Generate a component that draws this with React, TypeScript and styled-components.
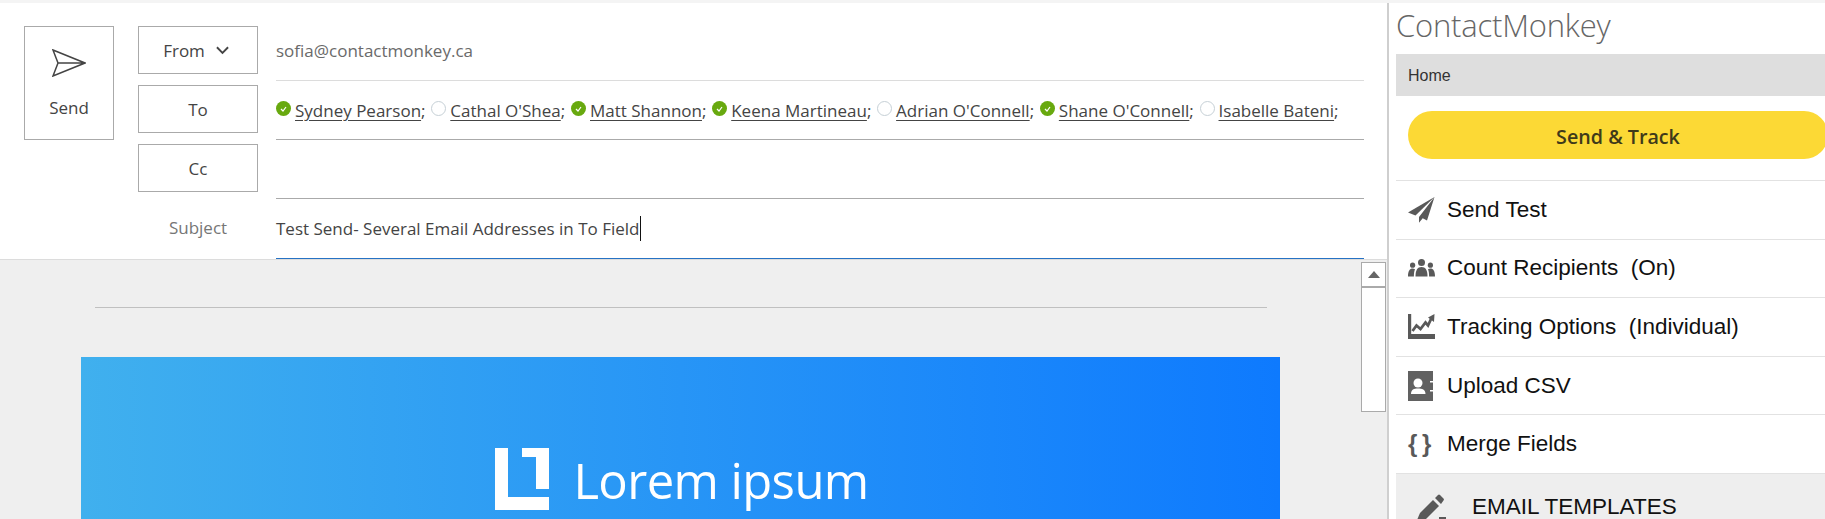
import styled, { createGlobalStyle } from 'styled-components'

const GlobalStyle = createGlobalStyle`
  * { box-sizing: border-box; }
  html, body { margin: 0; height: 100%; overflow: hidden; background: #fff; }
  #root { height: 100%; }
`

const uiFont = `'Open Sans', 'Noto Sans', sans-serif`
const menuFont = `'Liberation Sans', Arial, sans-serif`

const Page = styled.div`
  display: flex;
  height: 519px;
  overflow: hidden;
  border-top: 3px solid #f4f4f4;
  font-family: ${uiFont};
  color: #444;
`

const Compose = styled.main`
  position: relative;
  flex: 0 0 1389px;
  display: flex;
  flex-direction: column;
  border-right: 2px solid #cfcfcf;
  background: #efefef;
`

const Header = styled.header`
  display: flex;
  gap: 24px;
  padding: 19px 23px 0 24px;
  background: #fff;
  border-bottom: 1px solid #dcdcdc;
`

const SendButton = styled.button`
  flex: 0 0 90px;
  height: 114px;
  margin-top: 4px;
  padding: 0;
  display: flex;
  flex-direction: column;
  align-items: center;
  background: #fff;
  border: 1px solid #aaa;
  font: 400 17px ${uiFont};
  color: #444;

  svg { margin-top: 22px; margin-bottom: 19px; }
`

const Rows = styled.div`
  flex: 1;
  display: flex;
  flex-direction: column;
`

const Row = styled.div<{ $tall?: boolean }>`
  display: flex;
  gap: 18px;
  height: ${({ $tall }) => ($tall ? '60px' : '59px')};
`

const LabelButton = styled.div<{ $menu?: boolean }>`
  flex: 0 0 120px;
  height: 48px;
  margin-top: 4px;
  padding: 1px ${({ $menu }) => ($menu ? '4px' : '0')} 0 0;
  display: flex;
  align-items: center;
  justify-content: center;
  gap: 11px;
  border: 1px solid #aaa;
  font-size: 17px;
  color: #444;
`

const SubjectLabel = styled.div`
  flex: 0 0 120px;
  padding-top: 17px;
  text-align: center;
  font-size: 17px;
  color: #767676;
`

const Field = styled.div<{ $line: string; $muted?: boolean }>`
  flex: 1;
  display: flex;
  align-items: center;
  padding-bottom: ${({ $muted }) => ($muted ? '2px' : '0')};
  border-bottom: 1px solid ${({ $line }) => $line};
  font-size: 17px;
  color: ${({ $muted }) => ($muted ? '#6a6a6a' : '#444')};
`

const Caret = styled.span`
  display: inline-block;
  width: 1px;
  height: 25px;
  margin-left: 1px;
  background: #111;
`

const Recipient = styled.span`
  display: inline-flex;
  align-items: center;
  margin-right: 5.75px;
  white-space: pre;
`

const Name = styled.span`
  margin-left: 4px;
  text-decoration: underline;
  text-underline-offset: 3px;
  text-decoration-thickness: 1px;
`

const StatusDot = styled.span<{ $ok: boolean }>`
  flex: none;
  width: 15px;
  height: 15px;
  display: flex;
  align-items: center;
  justify-content: center;
  margin-top: -3px;
  border-radius: 50%;
  background: ${({ $ok }) => ($ok ? '#68a90f' : '#fff')};
  border: ${({ $ok }) => ($ok ? 'none' : '1px solid #c6d0d6')};
`

const Reading = styled.section`
  position: relative;
  flex: 1;
  overflow: hidden;
  padding: 47px 107px 0 81px;
`

const Rule = styled.div`
  height: 1px;
  margin: 0 13px 49px 14px;
  background: #c0c0c0;
`

const Banner = styled.div`
  height: 300px;
  display: flex;
  justify-content: center;
  align-items: flex-start;
  gap: 24px;
  padding: 91px 0 0 3px;
  color: #fff;
  background: linear-gradient(90deg, #40b0ee 0%, #0e7afe 100%);
`

const BannerText = styled.span`
  margin-top: 1px;
  font-size: 49px;
  line-height: 62px;
  letter-spacing: -0.6px;
`

const ScrollTrack = styled.div`
  position: absolute;
  top: 2px;
  right: 1px;
  width: 25px;
  height: 150px;
  background: #fff;
  border: 1px solid #aaa;
`

const ScrollUp = styled.div`
  height: 25px;
  display: flex;
  align-items: center;
  justify-content: center;
  border-bottom: 2px solid #aaa;
`

const Sidebar = styled.aside`
  flex: 1;
  min-width: 0;
  padding-left: 7px;
  overflow: hidden;
`

const Title = styled.h1`
  margin: 0;
  height: 51px;
  font-size: 31px;
  font-weight: 300;
  line-height: 45px;
  letter-spacing: -0.2px;
  color: #666;
`

const Crumb = styled.div`
  height: 42px;
  padding: 1px 0 0 12px;
  display: flex;
  align-items: center;
  background: #dedede;
  font: 16px ${menuFont};
  color: #333;
`

const TrackWrap = styled.div`
  height: 85px;
  padding: 15px 0 0 12px;
  border-bottom: 1px solid #e2e2e2;
`

const TrackButton = styled.div`
  width: 420px;
  height: 48px;
  padding-top: 2px;
  display: flex;
  align-items: center;
  justify-content: center;
  border-radius: 24px;
  background: #fcd935;
  font-size: 19.7px;
  font-weight: 600;
  color: #3f3a1a;
`

const MenuItem = styled.div`
  height: 58.6px;
  padding-left: 12px;
  display: flex;
  align-items: center;
  gap: 12px;
  border-bottom: 1px solid #e2e2e2;
  font: 22.5px ${menuFont};
  color: #111;
  white-space: pre;
`

const IconSlot = styled.span`
  flex: none;
  width: 27px;
  display: flex;
  justify-content: flex-start;
  color: #595959;
`

const Braces = styled.span`
  font: 700 24px ${menuFont};
  word-spacing: -2px;
  color: #595959;
  line-height: 1;
`

const SectionHead = styled.div`
  height: 60px;
  padding: 15px 0 0 20px;
  display: flex;
  align-items: flex-start;
  gap: 24px;
  background: #eeeeee;
  font: 22.5px/36px ${menuFont};
  color: #111;

  svg { margin-top: 4px; }
`

const recipients = [
  { name: 'Sydney Pearson', ok: true },
  { name: "Cathal O'Shea", ok: false },
  { name: 'Matt Shannon', ok: true },
  { name: 'Keena Martineau', ok: true },
  { name: "Adrian O'Connell", ok: false },
  { name: "Shane O'Connell", ok: true },
  { name: 'Isabelle Bateni', ok: false },
]

function SendOutline() {
  return (
    <svg width="34" height="28" viewBox="0 0 34 28" fill="none" stroke="#444" strokeWidth="1.5">
      <path d="M1 1 L33 14 L1 27 L6 14 Z M6 14 H33" />
    </svg>
  )
}

function Chevron() {
  return (
    <svg width="13" height="9" viewBox="0 0 14 9" fill="none" stroke="#444" strokeWidth="2">
      <path d="M1 1 L7 7 L13 1" />
    </svg>
  )
}

function Check() {
  return (
    <svg width="7" height="6" viewBox="0 0 7 6" fill="none" stroke="#fff" strokeWidth="1.2">
      <path d="M1 3 L3 5 L6 1" />
    </svg>
  )
}

function Logo() {
  return (
    <svg width="54" height="62" viewBox="0 0 54 62" fill="#fff">
      <path d="M0 0 H13 V49 H54 V62 H0 Z" />
      <path d="M27 0 H54 V41 H41 V9 H27 Z" />
    </svg>
  )
}

function PlaneIcon() {
  return (
    <svg width="27" height="26" viewBox="0 0 27 26" fill="#595959">
      <path d="M26.5 0 L0 15.5 L7.5 18.5 Z" />
      <path d="M26.5 0 L11 20 L11 25.8 L14.7 21.3 L19 23.5 Z" />
    </svg>
  )
}

function PeopleIcon() {
  return (
    <svg width="27" height="18" viewBox="0 0 27 18" fill="#595959">
      <circle cx="13.5" cy="3.5" r="3.5" />
      <circle cx="4.6" cy="6.2" r="2.6" />
      <circle cx="22.4" cy="6.2" r="2.6" />
      <path d="M7.5 17.5 C7.5 11 9.5 8 13.5 8 C17.5 8 19.5 11 19.5 17.5 Z" />
      <path d="M0 17.5 C0 12 1.8 9.5 4.6 9.5 C5.6 9.5 6.4 9.8 7 10.3 C6.2 12 5.9 14.5 5.9 17.5 Z" />
      <path d="M27 17.5 C27 12 25.2 9.5 22.4 9.5 C21.4 9.5 20.6 9.8 20 10.3 C20.8 12 21.1 14.5 21.1 17.5 Z" />
    </svg>
  )
}

function TrackingIcon() {
  return (
    <svg width="27" height="25" viewBox="0 0 27 25" fill="#595959">
      <path d="M0 0 H3.2 V20 H27 V25 H0 Z" />
      <path d="M4.5 17 L8.5 11.5 L12.5 15 L17.5 8.5 L20 11.5 L23.5 4" fill="none" stroke="#595959" strokeWidth="2.8" />
      <path d="M20 3.5 L26.5 0 L26 8 Z" />
    </svg>
  )
}

function ContactsIcon() {
  return (
    <svg width="25" height="30" viewBox="0 0 25 30" fill="#616161">
      <path d="M0 0 H25 V10 H22 V11.5 H25 V19 H22 V20.5 H25 V30 H22 V30 H0 Z" />
      <circle cx="10" cy="12" r="4.5" fill="#fff" />
      <path d="M3 23 C3 18.5 6 17.5 10 17.5 C14 17.5 17.5 18.5 17.5 23 Z" fill="#fff" />
    </svg>
  )
}

function PencilIcon() {
  return (
    <svg width="32" height="32" viewBox="0 0 32 32" fill="#595959">
      <path d="M1 27 L4 20 L17 7 L23 13 L10 26 L3 30 Z" />
      <path d="M19 5 L22 2 Q23 1 24 2 L27.5 5.5 Q28.5 6.5 27.5 7.5 L25 11 Z" />
      <path d="M23 24 H30 V26 H23 Z M20 29 H30 V31 H20 Z" />
    </svg>
  )
}

export default function App() {
  return (
    <>
      <GlobalStyle />
      <Page>
        <Compose>
          <Header>
            <SendButton>
              <SendOutline />
              Send
            </SendButton>
            <Rows>
              <Row>
                <LabelButton $menu>
                  From <Chevron />
                </LabelButton>
                <Field $line="#dcdcdc" $muted>
                  sofia@contactmonkey.ca
                </Field>
              </Row>
              <Row>
                <LabelButton>To</LabelButton>
                <Field $line="#aaa">
                  {recipients.map((r) => (
                    <Recipient key={r.name}>
                      <StatusDot $ok={r.ok}>{r.ok && <Check />}</StatusDot>
                      <Name>{r.name}</Name>;
                    </Recipient>
                  ))}
                </Field>
              </Row>
              <Row>
                <LabelButton>Cc</LabelButton>
                <Field $line="#aaa" />
              </Row>
              <Row $tall>
                <SubjectLabel>Subject</SubjectLabel>
                <Field $line="#2672c4">
                  Test Send- Several Email Addresses in To Field
                  <Caret />
                </Field>
              </Row>
            </Rows>
          </Header>
          <Reading>
            <Rule />
            <Banner>
              <Logo />
              <BannerText>Lorem ipsum</BannerText>
            </Banner>
            <ScrollTrack>
              <ScrollUp>
                <svg width="12" height="7" viewBox="0 0 12 7" fill="#666">
                  <path d="M6 0 L12 7 H0 Z" />
                </svg>
              </ScrollUp>
            </ScrollTrack>
          </Reading>
        </Compose>
        <Sidebar>
          <Title>ContactMonkey</Title>
          <Crumb>Home</Crumb>
          <TrackWrap>
            <TrackButton>Send &amp; Track</TrackButton>
          </TrackWrap>
          <MenuItem>
            <IconSlot>
              <PlaneIcon />
            </IconSlot>
            Send Test
          </MenuItem>
          <MenuItem>
            <IconSlot>
              <PeopleIcon />
            </IconSlot>
            Count Recipients  (On)
          </MenuItem>
          <MenuItem>
            <IconSlot>
              <TrackingIcon />
            </IconSlot>
            Tracking Options  (Individual)
          </MenuItem>
          <MenuItem>
            <IconSlot>
              <ContactsIcon />
            </IconSlot>
            Upload CSV
          </MenuItem>
          <MenuItem>
            <IconSlot>
              <Braces>{'{ }'}</Braces>
            </IconSlot>
            Merge Fields
          </MenuItem>
          <SectionHead>
            <PencilIcon />
            EMAIL TEMPLATES
          </SectionHead>
        </Sidebar>
      </Page>
    </>
  )
}
